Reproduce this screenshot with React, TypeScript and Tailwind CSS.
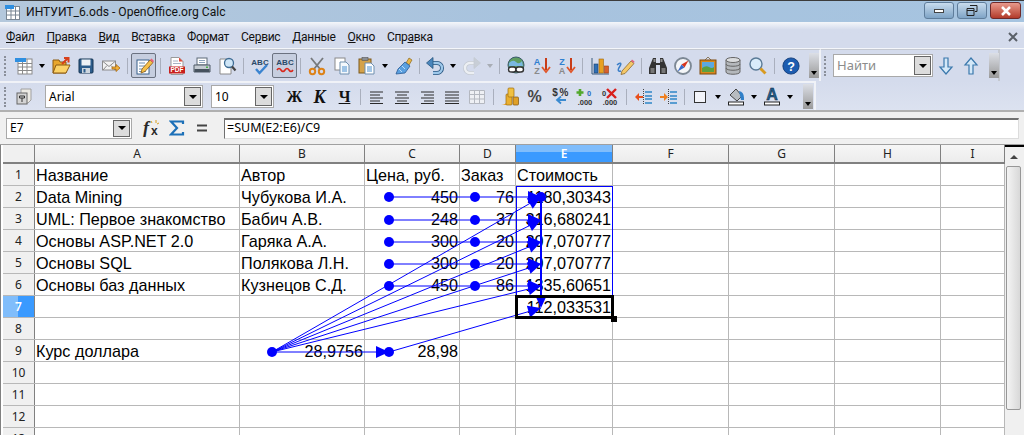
import type { ReactNode } from 'react'

const UI = { fontFamily: '"Noto Sans", sans-serif' }
const UI2 = { fontFamily: 'Roboto, "Noto Sans", sans-serif' }

function Icon({ children, s = 20 }: { children: ReactNode; s?: number }) {
  return <svg width={s} height={s} viewBox="0 0 20 20" className="block">{children}</svg>
}

const Table = () => (
  <Icon>
    <rect x="4" y="3" width="14" height="15" fill="#fff" stroke="#8a8a8a" />
    <path d="M4 7.500h14M4 11h14M4 14.500h14M8.500 3v15M13 3v15" stroke="#8a8a8a" />
    <rect x="1" y="2" width="11" height="4" fill="#2f8fe0" />
  </Icon>
)
const Folder = () => (
  <Icon>
    <path d="M2 4h6l1 2h6v11H2z" fill="#e8a62c" stroke="#8c5a10" />
    <path d="M2 17l3-8h14l-4 8z" fill="#fbd267" stroke="#8c5a10" />
    <path d="M11 8l6-6M13 2h4.500v4.500" stroke="#d8401c" strokeWidth="2" fill="none" />
  </Icon>
)
const Save = () => (
  <Icon>
    <rect x="3" y="3" width="14" height="14" rx="1" fill="#2d5d8c" stroke="#153452" />
    <rect x="5.500" y="3.500" width="9" height="6" fill="#eef2f6" />
    <rect x="6" y="12" width="8" height="5" fill="#cdd6df" />
    <rect x="7.500" y="13" width="2" height="3.500" fill="#2d5d8c" />
  </Icon>
)
const Mail = () => (
  <Icon>
    <rect x="1.500" y="5" width="13" height="9" fill="#f2f2f2" stroke="#8c8c8c" />
    <path d="M2 5.500l6 5 6-5M2 14l4-4.500M14 14l-4-4.500" stroke="#8c8c8c" fill="none" />
    <path d="M11 11h4V8.500l4 3.500-4 3.500V13h-4z" fill="#f3b23a" stroke="#a86a10" strokeWidth=".8" />
  </Icon>
)
const Edit = () => (
  <Icon>
    <rect x="3" y="4" width="12" height="14" fill="#fff" stroke="#38618c" />
    <path d="M5 7h6M5 10h7M5 13h7M5 15.500h7" stroke="#6d8db0" />
    <path d="M8 13l8-9 3 2.500-8 9-4 1.500z" fill="#f5c04a" stroke="#8c5a10" strokeWidth=".8" />
    <path d="M16 4l1.500-1.500 2.500 2.500-1 1.500z" fill="#e8607a" />
  </Icon>
)
const Pdf = () => (
  <Icon>
    <path d="M4 1.500h8l4 4v13H4z" fill="#fff" stroke="#9a9a9a" />
    <path d="M6 5h5M6 7.500h8" stroke="#a8b4c4" />
    <path d="M12 1.500l4 4h-4z" fill="#e04a3a" />
    <rect x="2" y="10.500" width="16" height="7" fill="#c8201c" />
    <text x="10" y="16.300" textAnchor="middle" fontSize="6.500" fontWeight="700" fill="#fff" fontFamily="Liberation Sans">PDF</text>
  </Icon>
)
const Print = () => (
  <Icon>
    <rect x="5" y="2" width="10" height="7" fill="#fff" stroke="#5d6b78" />
    <path d="M7 4.500h6M7 6.500h6" stroke="#8ea4bc" />
    <path d="M2 9h16v7H2z" fill="#c4cbd2" stroke="#4e5a66" />
    <rect x="2.500" y="13" width="15" height="3" fill="#46525e" />
    <rect x="14" y="10.500" width="2" height="1.500" fill="#4bb04b" />
  </Icon>
)
const Preview = () => (
  <Icon>
    <path d="M3 3h8l3 3v12H3z" fill="#fff" stroke="#8a8a8a" />
    <circle cx="12" cy="7" r="4.500" fill="#cfe6f7" stroke="#3e6c94" strokeWidth="1.300" />
    <path d="M15 10.500l3.500 4" stroke="#444" strokeWidth="2.200" />
  </Icon>
)
const Spell = ({ wave }: { wave?: boolean }) => (
  <Icon>
    <text x="10" y="9" textAnchor="middle" fontSize="8" fontWeight="700" fill="#2a4a68" fontFamily="Liberation Sans">ABC</text>
    {wave
      ? <path d="M2 14q2-3 4 0t4 0 4 0 4 0" stroke="#d8281c" strokeWidth="1.600" fill="none" />
      : <path d="M6 13l3.500 4L17 9" stroke="#3a84d0" strokeWidth="2.400" fill="none" />}
  </Icon>
)
const Cut = () => (
  <Icon>
    <path d="M4 2l9 11M16 2L7 13" stroke="#76797c" strokeWidth="1.800" />
    <circle cx="5.500" cy="15.500" r="2.700" fill="none" stroke="#dc8218" strokeWidth="2" />
    <circle cx="14.500" cy="15.500" r="2.700" fill="none" stroke="#dc8218" strokeWidth="2" />
  </Icon>
)
const Copy = () => (
  <Icon>
    <rect x="3" y="2" width="10" height="12" fill="#fff" stroke="#8a8a8a" />
    <path d="M8 6h6l3 3v9H8z" fill="#f4f8fc" stroke="#6f8fae" />
    <path d="M10 11h5M10 13h5M10 15h5" stroke="#4a90d0" />
  </Icon>
)
const Paste = () => (
  <Icon>
    <rect x="2" y="3" width="12" height="14" fill="#d4a24a" stroke="#7c5a1c" />
    <rect x="5" y="1.500" width="6" height="3" fill="#8a8f94" stroke="#555" strokeWidth=".6" />
    <path d="M8 7h6l3 3v8H8z" fill="#fff" stroke="#6f8fae" />
    <path d="M10 11h5M10 13h5M10 15h5" stroke="#4a90d0" />
  </Icon>
)
const Brush = () => (
  <Icon>
    <path d="M12 7l3-5 3 2-3 5z" fill="#e8b64a" stroke="#8c6a1c" strokeWidth=".7" />
    <path d="M11 6l5 4-5 7-9 1 2-5z" fill="#5aa0e0" stroke="#2a5a94" strokeWidth=".8" />
    <path d="M5 13l3 3M8 10l3 3" stroke="#bcdcf6" />
  </Icon>
)
const Undo = ({ off }: { off?: boolean }) => {
  const c = off ? '#c8ced6' : '#4a86bc'
  return (
    <Icon>
      <g transform={off ? 'translate(20 0) scale(-1 1)' : undefined}>
        <path d="M6 7h6a5 5 0 0 1 0 10H8" fill="none" stroke={off ? '#c4cad2' : '#27557f'} strokeWidth="4" />
        <path d="M6 7h6a5 5 0 0 1 0 10H8" fill="none" stroke={off ? '#eceff3' : '#9ec8ea'} strokeWidth="2.400" />
        <path d="M8 1.500L1.500 7 8 12.500z" fill={c} stroke={off ? '#c4cad2' : '#27557f'} strokeWidth=".8" />
      </g>
    </Icon>
  )
}
const Globe = () => (
  <Icon>
    <circle cx="10" cy="9" r="8" fill="#5f9e62" stroke="#3a5a6e" />
    <path d="M3 7q4-4 7-1t6-1l1 5H3z" fill="#79b8e0" />
    <rect x="2.500" y="11" width="7.500" height="5" rx="2.500" fill="#fff" stroke="#333" strokeWidth="1.400" />
    <rect x="10" y="11" width="7.500" height="5" rx="2.500" fill="#fff" stroke="#333" strokeWidth="1.400" />
  </Icon>
)
const Sort = ({ a, b }: { a: string; b: string }) => (
  <Icon>
    <text x="6" y="9" textAnchor="middle" fontSize="9" fontWeight="700" fill="#2f7fd0" fontFamily="Liberation Sans">{a}</text>
    <text x="6" y="18" textAnchor="middle" fontSize="9" fontWeight="700" fill="#8a8a8a" fontFamily="Liberation Sans">{b}</text>
    <path d="M15 2v12" stroke="#c83c18" strokeWidth="2" />
    <path d="M11 11l4 5 4-5" stroke="#e0562a" strokeWidth="1.800" fill="none" />
  </Icon>
)
const Chart = () => (
  <Icon>
    <path d="M2 2v16h17" stroke="#3a5a7a" fill="none" />
    <rect x="4" y="8" width="4" height="9" fill="#2f6fb4" stroke="#1c3f6c" strokeWidth=".6" />
    <rect x="9" y="3" width="4.500" height="14" fill="#e8a020" stroke="#9c6410" strokeWidth=".6" />
    <rect x="14.500" y="10" width="4" height="7" fill="#d8602c" stroke="#9c3c10" strokeWidth=".6" />
  </Icon>
)
const Draw = () => (
  <Icon>
    <path d="M2 9c3-3 5-2 3 1s-3 6 1 5" fill="none" stroke="#3a7ec8" strokeWidth="1.500" />
    <path d="M7 15l9-10 3 2.500-9 10-4 1z" fill="#f5c868" stroke="#8c6a30" strokeWidth=".8" />
    <path d="M16 5l1-1.500 2.500 2L19 7z" fill="#e0607a" />
  </Icon>
)
const Binoculars = () => (
  <Icon>
    <path d="M5 2h3v5h4V2h3l4 10v6h-7V9H8v9H1v-6z" fill="#333" />
    <path d="M5.500 3h2v3h-2zM12.500 3h2v3h-2z" fill="#8f8f8f" />
    <rect x="2.500" y="12" width="4" height="5" fill="#777" />
    <rect x="13.500" y="12" width="4" height="5" fill="#777" />
  </Icon>
)
const Compass = () => (
  <Icon>
    <circle cx="10" cy="10" r="8" fill="#f4f6f8" stroke="#7c8894" strokeWidth="1.800" />
    <path d="M15.500 4.500L11.500 11.500 8.500 8.500z" fill="#d8341c" />
    <path d="M4.500 15.500L8.500 8.500l3 3z" fill="#3a6ac8" />
  </Icon>
)
const Gallery = () => (
  <Icon>
    <path d="M7 4l3-3 3 3" fill="none" stroke="#8a7a60" />
    <rect x="2" y="4" width="16" height="14" fill="#d8881c" stroke="#7c4a10" />
    <rect x="4" y="6" width="12" height="10" fill="#5ca8e0" />
    <path d="M4 12q4-3 7-1t5 0v5H4z" fill="#5ca040" />
  </Icon>
)
const Data = () => (
  <Icon>
    <path d="M3 4v12c0 3 14 3 14 0V4z" fill="#b4b8bc" stroke="#666" />
    <ellipse cx="10" cy="4" rx="7" ry="2.500" fill="#dadcde" stroke="#666" />
    <path d="M3 8c0 3 14 3 14 0M3 12c0 3 14 3 14 0" fill="none" stroke="#666" />
  </Icon>
)
const Zoom = () => (
  <Icon>
    <circle cx="8" cy="8" r="6" fill="#d8ecfa" stroke="#5a7a96" strokeWidth="1.400" />
    <path d="M12.500 12.500l5 5" stroke="#d89a20" strokeWidth="3" />
  </Icon>
)
const Help = () => (
  <Icon s={18}>
    <circle cx="10" cy="10" r="9" fill="#1c5cb0" stroke="#123c78" />
    <text x="10" y="15" textAnchor="middle" fontSize="14" fontWeight="700" fill="#fff" fontFamily="Liberation Sans">?</text>
  </Icon>
)
const Styles = () => (
  <Icon>
    <path d="M7 2h10v11l-3 3H7z" fill="#eceae4" stroke="#a0a0a0" />
    <rect x="3" y="6" width="10" height="11" fill="#d4d4d4" stroke="#666" />
    <path d="M5.500 9h5v2h-5zM8 11v4" stroke="#333" fill="none" />
  </Icon>
)
const Letter = ({ t, serif }: { t: string; serif?: boolean }) => (
  <span
    className={serif ? 'text-[18px] leading-none font-bold italic text-[#111]' : 'text-[16px] leading-none font-bold text-[#111]'}
    style={{ fontFamily: '"Liberation Serif", serif' }}
  >
    {t}
  </span>
)
const Align = ({ k }: { k: 'l' | 'c' | 'r' | 'j' }) => {
  const sh = { l: 'M3 5h13M3 8h10M3 11h13M3 14h10M3 16.500h13', c: 'M3 5h14M5 8h10M3 11h14M5 14h10M3 16.500h14', r: 'M4 5h13M7 8h10M4 11h13M7 14h10M4 16.500h13', j: 'M3 5h14M3 8h14M3 11h14M3 14h14M3 16.500h14' }[k]
  return <Icon><path d={sh} stroke="#2a2a2a" fill="none" /></Icon>
}
const Merge = () => (
  <Icon><path d="M2.500 3.500h15v13h-15zM2.500 7.500h15M2.500 12h15M7.500 3.500v13M12.500 3.500v13" fill="#eef0f4" stroke="#b4b8c0" /></Icon>
)
const Coins = () => (
  <Icon>
    <path d="M1 18q4 0 6-3h3v3z" fill="#e8a020" />
    <rect x="6" y="7" width="6" height="11" rx="1" fill="#eab030" stroke="#9c6a10" strokeWidth=".7" />
    <rect x="8" y="1" width="6" height="9" rx="1" fill="#f0c040" stroke="#9c6a10" strokeWidth=".7" />
    <rect x="13" y="10" width="5.500" height="8" rx="1" fill="#dfa028" stroke="#805410" strokeWidth=".7" />
  </Icon>
)
const Pct = () => <span className="text-[16px] leading-none font-bold text-[#444]" style={{ fontFamily: '"Liberation Sans", sans-serif' }}>%</span>
const NumFmt = () => (
  <Icon>
    <text x="5" y="9" textAnchor="middle" fontSize="10" fontWeight="700" fill="#333" fontFamily="Liberation Sans">$</text>
    <text x="14" y="9" textAnchor="middle" fontSize="10" fontWeight="700" fill="#333" fontFamily="Liberation Sans">%</text>
    <path d="M16 13H8M11 9.500L7 13l4 3.500" stroke="#3a8ad0" strokeWidth="1.800" fill="none" />
  </Icon>
)
const Dec = ({ del }: { del?: boolean }) => (
  <Icon>
    <text x={del ? 4 : 14} y="9" textAnchor="middle" fontSize="7.500" fontWeight="700" fill={del ? '#333' : '#2a6ac0'} fontFamily="Liberation Sans">0</text>
    <text x="10" y="18" textAnchor="middle" fontSize="7.500" fontWeight="700" fill="#333" fontFamily="Liberation Sans">.000</text>
    {del
      ? <path d="M7 2l9 9M16 2l-9 9" stroke="#d8201c" strokeWidth="2.400" />
      : <path d="M5 2v7M1.500 5.500h7" stroke="#52a82c" strokeWidth="2.600" />}
  </Icon>
)
const Indent = ({ inc }: { inc?: boolean }) => (
  <Icon>
    <path d="M9.500 2v16" stroke="#444" strokeDasharray="1 1" />
    <path d="M11 5h7M11 9h7M11 12h7M11 16h7" stroke="#2f86c8" strokeWidth="1.500" />
    <path d={inc ? 'M1 9h4V6l4 4-4 4v-3H1z' : 'M9 9H5V6l-4 4 4 4v-3h4z'} fill={inc ? '#f08020' : '#e8501c'} />
  </Icon>
)
const BorderBox = () => <div className="w-3 h-3 border border-[#333] bg-[#f2f4fa]" />
const Bucket = () => (
  <Icon>
    <path d="M4 8l6-6 6 7-5 5z" fill="#b8bcc0" stroke="#444" />
    <path d="M13 4q5 1 5 7v2h-3z" fill="#2f7fc8" />
    <rect x="2.500" y="15" width="15" height="3" fill="#fff" stroke="#222" />
  </Icon>
)
const FontColor = () => (
  <Icon>
    <text x="10" y="13" textAnchor="middle" fontSize="16" fontWeight="700" fill="#1f5f8f" stroke="#123" strokeWidth=".5" fontFamily="Liberation Sans">A</text>
    <rect x="2.500" y="15" width="15" height="3" fill="#fff" stroke="#222" />
  </Icon>
)
const ArrowV = ({ up }: { up?: boolean }) => (
  <Icon>
    <g transform={up ? 'rotate(180 10 10)' : undefined}>
      <path d="M8 2h4v9h4l-6 7-6-7h4z" fill="#d4e8f8" stroke="#3a78ac" strokeWidth="1.200" />
    </g>
  </Icon>
)

function Btn({ children, on }: { children: ReactNode; on?: boolean }) {
  return (
    <div className={on
      ? 'w-[25px] h-[25px] shrink-0 flex items-center justify-center rounded-[2px] border border-[#6b7280] bg-[#c6cedf]'
      : 'w-[25px] h-[25px] shrink-0 flex items-center justify-center'}>
      {children}
    </div>
  )
}
const Caret = ({ off, narrow }: { off?: boolean; narrow?: boolean }) => (
  <div className={narrow ? 'w-[11px] h-[25px] shrink-0 flex items-center justify-center' : 'w-[12px] h-[25px] shrink-0 flex items-center justify-center'}>
    <div className={off
      ? 'border-x-[3.500px] border-x-transparent border-t-[4px] border-t-[#a8adb5]'
      : 'border-x-[3.500px] border-x-transparent border-t-[4px] border-t-black'} />
  </div>
)
const Sep = ({ w = 'w-[8px]' }: { w?: string }) => (
  <div className={`${w} h-[25px] shrink-0 flex items-center justify-center`}>
    <div className="w-px h-[16px] bg-[#a9afbd]" />
  </div>
)
const Grip = () => (
  <div className="w-[3px] h-[20px] shrink-0 border-l-2 border-dotted border-[#8a8f9a]" />
)
const More = () => (
  <div className="w-[10px] h-[25px] shrink-0 flex items-end justify-center pb-[3px] bg-gradient-to-b from-[#dcdfe6] to-[#9a9a9a]">
    <div className="border-x-[3.500px] border-x-transparent border-t-[4px] border-t-black" />
  </div>
)
function Combo({ text, w, muted }: { text: string; w: string; muted?: boolean }) {
  return (
    <div className={`${w} h-[23px] shrink-0 flex items-center bg-white border border-[#a9a9a9] pl-[3px] pr-px`}>
      <span className={muted ? 'flex-1 text-[13px] text-[#8c8c8c]' : 'flex-1 text-[12px] text-black'} style={UI}>{text}</span>
      <div className="w-[17px] h-[19px] flex items-center justify-center border border-[#666] bg-[#dcdcdc]">
        <div className="border-x-[4px] border-x-transparent border-t-[4px] border-t-black" />
      </div>
    </div>
  )
}

function TitleBar() {
  return (
    <div className="h-[22px] flex items-center border-t border-[#3c3c3c] bg-gradient-to-r from-[#b4c8dc] via-[#a8c3de] to-[#a6c4e0]">
      <div className="w-[26px] pl-[5px] shrink-0">
        <svg width="15" height="16" viewBox="0 0 15 16" className="block">
          <rect x="1.500" y="2.500" width="13" height="13" fill="#fff" stroke="#7a8794" />
          <path d="M1.500 7h13M1.500 11h13M6 2.500v13M10.500 2.500v13" stroke="#7a8794" />
          <rect x="0" y="1" width="9" height="4" fill="#2f8fe0" />
        </svg>
      </div>
      <span className="flex-1 text-[12.100px] text-[#111] pt-px" style={UI2}>ИНТУИТ_6.ods - OpenOffice.org Calc</span>
      <div className="flex gap-[3px] pr-[3px] pb-[2px]">
        <div className="w-[30px] h-[17px] flex items-center justify-center rounded-[3px] border border-[#5f7d9b] bg-gradient-to-b from-[#c8dcee] to-[#7fa4c6]">
          <div className="w-[10px] h-[4px] bg-white border border-[#444]" />
        </div>
        <div className="w-[30px] h-[17px] flex items-center justify-center rounded-[3px] border border-[#5f7d9b] bg-gradient-to-b from-[#c8dcee] to-[#7fa4c6]">
          <svg width="12" height="11" viewBox="0 0 12 11"><path d="M4 .5h7v6H9M1 3.500h7v7H1zM1 5.500h7" fill="none" stroke="#222" /></svg>
        </div>
        <div className="w-[31px] h-[17px] flex items-center justify-center rounded-[3px] border border-[#6e2a2a] bg-gradient-to-b from-[#e8998c] to-[#b23a2a]">
          <svg width="12" height="10" viewBox="0 0 12 10"><path d="M2 1l8 8M10 1l-8 8" stroke="#fff" strokeWidth="2.500" /></svg>
        </div>
      </div>
    </div>
  )
}

const menu: [string, string, string][] = [
  ['', 'Ф', 'айл'], ['', 'П', 'равка'], ['', 'В', 'ид'], ['Вс', 'т', 'авка'], ['Фо', 'р', 'мат'],
  ['Се', 'р', 'вис'], ['', 'Д', 'анные'], ['', 'О', 'кно'], ['Спр', 'а', 'вка'],
]

function MenuBar() {
  return (
    <div className="h-[26px] flex items-center pl-[6px] pr-[6px] bg-gradient-to-b from-[#f4f6fa] from-[0%] via-[#d4dbec] via-[30%] to-[#d4dbec]">
      <div className="flex-1 flex gap-[12px] text-[12px] tracking-[-0.3px] text-[#111] pt-[3px]" style={UI2}>
        {menu.map(([a, u, b]) => (
          <span key={a + u + b}>{a}<span className="underline">{u}</span>{b}</span>
        ))}
      </div>
      <svg width="10" height="10" viewBox="0 0 10 10" className="mt-[4px]"><path d="M1 1l8 8M9 1L1 9" stroke="#5a6068" strokeWidth="2" /></svg>
    </div>
  )
}

function ToolbarOne() {
  return (
    <div className="h-[33px] flex border-t border-[#f4f6fa]">
      <div className="w-[821px] shrink-0 flex items-center pl-[4px] border-r-2 border-[#f0f2f7] border-t border-t-[#c4c8d0]">
        <Grip />
        <div className="w-[4px] shrink-0" />
        <Btn><Table /></Btn><Caret />
        <Btn><Folder /></Btn><Btn><Save /></Btn><Btn><Mail /></Btn>
        <Sep /><Btn on><Edit /></Btn><Sep />
        <Btn><Pdf /></Btn><Btn><Print /></Btn><Btn><Preview /></Btn>
        <Sep /><Btn><Spell /></Btn><Btn on><Spell wave /></Btn><Sep w="w-[7px]" />
        <Btn><Cut /></Btn><Btn><Copy /></Btn><Btn><Paste /></Btn><Caret />
        <Btn><Brush /></Btn>
        <Sep w="w-[6px]" /><Btn><Undo /></Btn><Caret /><Btn><Undo off /></Btn><Caret off />
        <Sep w="w-[7px]" /><Btn><Globe /></Btn><Btn><Sort a="A" b="Z" /></Btn><Btn><Sort a="Z" b="A" /></Btn>
        <Sep w="w-[9px]" /><Btn><Chart /></Btn><Btn><Draw /></Btn>
        <Sep /><Btn><Binoculars /></Btn><Btn><Compass /></Btn><Btn><Gallery /></Btn><Btn><Data /></Btn><Btn><Zoom /></Btn>
        <Sep /><Btn><Help /></Btn>
        <div className="w-[6px] shrink-0" /><More />
      </div>
      <div className="w-[179px] shrink-0 flex items-center pl-[3px] border-r-2 border-[#c4c8d0] border-t border-t-[#c4c8d0]">
        <Grip />
        <div className="w-[6px] shrink-0" />
        <Combo text="Найти" w="w-[100px]" muted />
        <Btn><ArrowV /></Btn><Btn><ArrowV up /></Btn>
        <div className="w-[6px] shrink-0" /><More />
      </div>
    </div>
  )
}

function ToolbarTwo() {
  return (
    <div className="h-[31px] flex bg-gradient-to-b from-[#d4dbec] to-[#dce2f0] border-b-2 border-[#b0b0b0]">
      <div className="w-[816px] shrink-0 flex items-center pl-[4px] border-r-2 border-[#f0f2f7] border-t-2 border-t-[#f0f2f7]">
        <Grip />
        <div className="w-[4px] shrink-0" />
        <Btn><Styles /></Btn>
        <div className="w-[9px] shrink-0" />
        <Combo text="Arial" w="w-[158px]" />
        <div className="w-[8px] shrink-0" />
        <Combo text="10" w="w-[63px]" />
        <div className="w-[8px] shrink-0" />
        <Btn><Letter t="Ж" /></Btn>
        <Btn><Letter t="К" serif /></Btn>
        <Btn><span className="text-[16px] leading-none font-bold underline text-[#111]" style={{ fontFamily: '"Liberation Serif", serif' }}>Ч</span></Btn>
        <Sep w="w-[7px]" />
        <Btn><Align k="l" /></Btn><Btn><Align k="c" /></Btn><Btn><Align k="r" /></Btn><Btn><Align k="j" /></Btn><Btn><Merge /></Btn>
        <Sep />
        <Btn><Coins /></Btn><Btn><Pct /></Btn><Btn><NumFmt /></Btn><Btn><Dec /></Btn><Btn><Dec del /></Btn>
        <Sep w="w-[9px]" />
        <Btn><Indent /></Btn><Btn><Indent inc /></Btn>
        <Sep w="w-[6px]" />
        <Btn><BorderBox /></Btn><Caret narrow />
        <Btn><Bucket /></Btn><Caret narrow />
        <Btn><FontColor /></Btn><Caret narrow />
        <div className="w-[8px] shrink-0" /><More />
      </div>
    </div>
  )
}

function FormulaBar() {
  return (
    <div className="h-[33px] flex items-center pl-[6px] pr-[5px] bg-[#f0f0f0] border-b border-[#a0a0a0]">
      <div className="w-[126px] h-[21px] shrink-0 flex items-center bg-white border border-[#a9a9a9] pl-[3px] pr-px">
        <span className="flex-1 text-[12px] text-black" style={UI}>E7</span>
        <div className="w-[17px] h-[17px] flex items-center justify-center border border-[#666] bg-[#dcdcdc]">
          <div className="border-x-[4px] border-x-transparent border-t-[4px] border-t-black" />
        </div>
      </div>
      <div className="w-[7px] shrink-0" />
      <Btn>
        <svg width="20" height="18" viewBox="0 0 20 18">
          <text x="1" y="15" fontSize="18" fontStyle="italic" fontWeight="700" fill="#2a2a2a" fontFamily="Liberation Serif">f</text>
          <text x="9" y="16" fontSize="12" fontWeight="700" fill="#2a2a2a" fontFamily="Liberation Sans">x</text>
          <path d="M9 2l1 2M14 1v3M17 4l-2 1" stroke="#d8a020" />
        </svg>
      </Btn>
      <Btn>
        <svg width="16" height="16" viewBox="0 0 16 16"><path d="M14 4V1.500H2L8 8l-6 6.500h12V12" fill="none" stroke="#1c70b8" strokeWidth="2.200" /></svg>
      </Btn>
      <Btn>
        <svg width="12" height="8" viewBox="0 0 12 8"><path d="M1 1.500h10M1 6.500h10" stroke="#444" strokeWidth="2" /></svg>
      </Btn>
      <div className="w-[10px] shrink-0" />
      <div className="flex-1 h-[21px] flex items-center pl-[2px] bg-white border border-[#dcdcdc] border-t-2 border-t-[#707070] border-l-[#707070]">
        <span className="text-[12.500px] text-black" style={UI}>=SUM(E2:E6)/C9</span>
      </div>
    </div>
  )
}

const cols: [string, string][] = [
  ['A', 'w-[205px]'], ['B', 'w-[125px]'], ['C', 'w-[95px]'], ['D', 'w-[56px]'], ['E', 'w-[97px]'],
  ['F', 'w-[116px]'], ['G', 'w-[106px]'], ['H', 'w-[106px]'], ['I', 'w-[64px]'],
]

type Row = Partial<Record<string, string>>
const rows: Row[] = [
  { A: 'Название', B: 'Автор', C: 'Цена, руб.', D: 'Заказ', E: 'Стоимость' },
  { A: 'Data Mining', B: 'Чубукова И.А.', C: '450', D: '76', E: '1180,30343' },
  { A: 'UML: Первое знакомство', B: 'Бабич А.В.', C: '248', D: '37', E: '316,680241' },
  { A: 'Основы ASP.NET 2.0', B: 'Гаряка А.А.', C: '300', D: '20', E: '207,070777' },
  { A: 'Основы SQL', B: 'Полякова Л.Н.', C: '300', D: '20', E: '207,070777' },
  { A: 'Основы баз данных', B: 'Кузнецов С.Д.', C: '450', D: '86', E: '1335,60651' },
  { E: '112,033531' },
  {},
  { A: 'Курс доллара', B: '28,9756', C: '28,98' },
  {}, {}, {}, {},
]

function isRight(i: number, c: string) {
  if (i === 0) return false
  return c === 'E' || c === 'D' || c === 'C' || (i === 8 && c === 'B')
}

function Sheet() {
  return (
    <div className="relative h-[290px] overflow-hidden flex bg-white">
      <div className="w-[1005px] shrink-0 pl-[2px] border-l border-[#808080]">
        <div className="flex h-[19px] border-b-2 border-[#808080]">
          <div className="w-[32px] shrink-0 bg-[#f0f0f0] border-r border-[#808080]" />
          {cols.map(([c, w]) => (
            <div
              key={c}
              className={c === 'E'
                ? `${w} shrink-0 flex items-center justify-center text-[12px] font-semibold text-white bg-[#3399ff] border-r border-[#808080] bg-gradient-to-b from-[#80bdfb] from-[40%] to-[#3a9aff] to-[40%]`
                : `${w} shrink-0 flex items-center justify-center text-[12px] text-[#222] bg-gradient-to-b from-[#f6f6f6] to-[#ececec] border-r border-[#808080]`}
              style={UI}
            >
              {c}
            </div>
          ))}
        </div>
        {rows.map((row, i) => (
          <div key={i} className="flex h-[22px] border-b border-[#b8b8b8]">
            <div
              className={i === 6
                ? 'w-[32px] shrink-0 flex items-center justify-center text-[12px] font-semibold text-white bg-gradient-to-r from-[#80bdfb] from-[50%] to-[#3a9aff] to-[50%] border-r border-[#808080]'
                : 'w-[32px] shrink-0 flex items-center justify-center text-[12px] text-[#222] bg-[#f0f0f0] border-r border-[#808080]'}
              style={UI}
            >
              {i + 1}
            </div>
            {cols.map(([c, w]) => (
              <div
                key={c}
                className={isRight(i, c)
                  ? `${w} shrink-0 px-px text-right text-[16.200px] leading-[23px] text-black border-r border-[#b8b8b8] overflow-hidden whitespace-nowrap`
                  : `${w} shrink-0 px-px text-left text-[16.200px] leading-[23px] text-black border-r border-[#b8b8b8] overflow-hidden whitespace-nowrap`}
                style={{ fontFamily: '"Liberation Sans", Arial, sans-serif' }}
              >
                {row[c]}
              </div>
            ))}
          </div>
        ))}
      </div>
      <div className="w-[19px] shrink-0 flex flex-col pl-px pr-[3px] bg-[#f0f0f0] border-t-2 border-black">
        <div className="h-[19px] flex items-center justify-center">
          <div className="border-x-[4px] border-x-transparent border-b-[4px] border-b-[#444]" />
        </div>
        <div className="h-[244px] rounded-[2px] border border-[#979797] bg-gradient-to-r from-[#f4f4f4] to-[#d8d8d8]" />
      </div>
      <Arrows />
      <div className="absolute left-[515px] top-[150px] w-[99px] h-[24px] border-[3px] border-black" />
      <div className="absolute left-[611px] top-[171px] w-[6px] h-[6px] bg-black" />
    </div>
  )
}

// precedent arrows sit on top of the cells, coordinates are page px minus sheet top (145)
function Head({ x1, y1, x2, y2 }: { x1: number; y1: number; x2: number; y2: number }) {
  const a = Math.atan2(y2 - y1, x2 - x1)
  const l = 13, h = 6
  const bx = x2 - l * Math.cos(a), by = y2 - l * Math.sin(a)
  const p = `${x2},${y2} ${bx - h * Math.sin(a)},${by + h * Math.cos(a)} ${bx + h * Math.sin(a)},${by - h * Math.cos(a)}`
  return <polygon points={p} fill="#0000ff" />
}
function Arrow({ x1, y1, x2, y2 }: { x1: number; y1: number; x2: number; y2: number }) {
  return (
    <>
      <line x1={x1} y1={y1} x2={x2} y2={y2} stroke="#0000ff" strokeWidth="1" />
      <Head x1={x1} y1={y1} x2={x2} y2={y2} />
    </>
  )
}

function Arrows() {
  const ys = [52, 75, 97, 119, 141]
  return (
    <svg className="absolute left-0 top-0 pointer-events-none" width="1005" height="290">
      <rect x="516.500" y="41.500" width="96" height="109" fill="none" stroke="#0000ff" />
      {ys.map(y => (
        <g key={y}>
          <Arrow x1={272} y1={207} x2={541} y2={y} />
          <Arrow x1={389} y1={y} x2={541} y2={y} />
          <circle cx={389} cy={y} r={5} fill="#0000ff" />
          <circle cx={475} cy={y} r={5} fill="#0000ff" />
        </g>
      ))}
      <circle cx={541} cy={52} r={5} fill="#0000ff" />
      <line x1={541} y1={52} x2={541} y2={155} stroke="#0000ff" strokeWidth="2" />
      <Head x1={541} y1={52} x2={541} y2={163} />
      <Arrow x1={389} y1={207} x2={541} y2={163} />
      <Arrow x1={272} y1={207} x2={389} y2={207} />
      <circle cx={272} cy={207} r={5} fill="#0000ff" />
      <circle cx={389} cy={207} r={5} fill="#0000ff" />
    </svg>
  )
}

export default function App() {
  return (
    <div className="w-[1024px] h-[435px] overflow-hidden bg-[#d4dbec] flex flex-col">
      <TitleBar />
      <MenuBar />
      <ToolbarOne />
      <ToolbarTwo />
      <FormulaBar />
      <Sheet />
    </div>
  )
}
